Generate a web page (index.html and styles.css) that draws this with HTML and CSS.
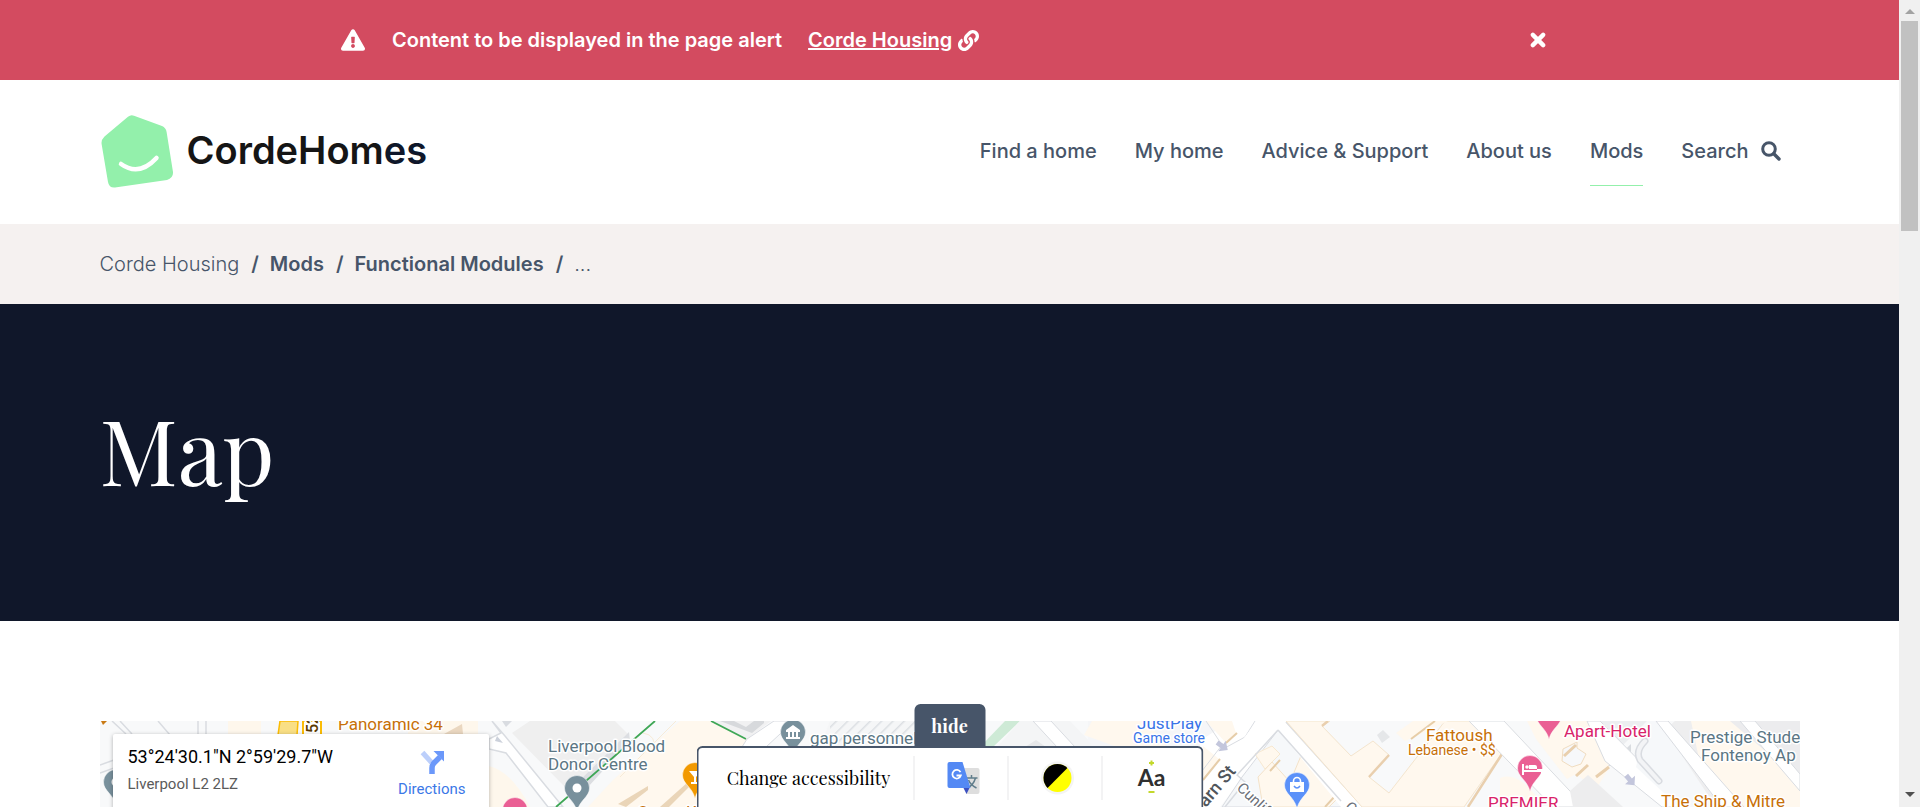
FILE: index.html
```html
<!DOCTYPE html>
<html lang="en">
<head>
<meta charset="utf-8">
<title>Map - Corde Housing</title>
<link rel="stylesheet" href="styles.css">
</head>
<body>
<div class="page">
  <div class="alert" role="alert">
    <svg class="icon-warning" viewBox="0 0 576 512" aria-hidden="true"><path fill="currentColor" d="M569.5 440C588 472 564.800 512 527.900 512H48.100c-36.900 0-60-40.100-41.600-72L246.400 24c18.500-32 64.700-32 83.200 0l239.900 416zM288 354c-25.400 0-46 20.600-46 46s20.600 46 46 46 46-20.600 46-46-20.600-46-46-46zm-43.700-165.300l7.400 136c.3 6.400 5.600 11.300 12 11.300h48.600c6.400 0 11.700-5 12-11.300l7.400-136c.4-6.900-5.100-12.700-12-12.700h-63.400c-6.900 0-12.400 5.800-12 12.700z"/></svg>
    <p class="alert-text">Content to be displayed in the page alert</p>
    <a class="alert-link" href="#"><span>Corde Housing</span>
      <svg class="icon-link" viewBox="0 0 512 512" aria-hidden="true"><path fill="currentColor" d="M326.600 185.400c59.700 59.800 58.900 155.700.4 214.600-.1.100-.2.300-.4.400l-67.200 67.200c-59.300 59.300-155.700 59.300-215 0-59.300-59.300-59.300-155.700 0-215l37.100-37.100c9.800-9.800 26.800-3.300 27.300 10.600.6 17.700 3.800 35.500 9.700 52.700 2 5.800.6 12.300-3.800 16.600l-13.100 13.100c-28 28-28.900 73.700-1.200 102 28 28.600 74.100 28.700 102.300.5l67.200-67.200c28.200-28.200 28.100-73.800 0-101.800-3.700-3.700-7.400-6.600-10.300-8.600a16 16 0 0 1-6.900-12.600c-.4-10.600 3.300-21.500 11.700-29.800l21.100-21.100c5.500-5.500 14.200-6.200 20.600-1.700a152.500 152.500 0 0 1 20.500 17.200zM467.500 44.400c-59.300-59.300-155.700-59.300-215 0l-67.200 67.200c-.1.100-.3.300-.4.400-58.600 58.900-59.400 154.800.4 214.600a152.500 152.500 0 0 0 20.500 17.200c6.400 4.500 15.100 3.800 20.600-1.700l21.100-21.100c8.400-8.400 12.100-19.200 11.700-29.800a16 16 0 0 0-6.900-12.600c-2.900-2-6.600-4.900-10.300-8.600-28.100-28.100-28.200-73.600 0-101.800l67.200-67.200c28.200-28.200 74.300-28.100 102.300.5 27.800 28.300 26.900 73.900-1.200 102l-13.100 13.100c-4.400 4.400-5.800 10.800-3.800 16.600 5.900 17.200 9 35 9.700 52.700.5 13.900 17.500 20.400 27.300 10.600l37.100-37.100c59.300-59.300 59.300-155.700 0-215z"/></svg>
    </a>
    <button class="alert-close" type="button" aria-label="Close alert">
      <svg viewBox="0 0 14 14" aria-hidden="true"><path d="M2.500 2.500l9 9M11.500 2.500l-9 9" stroke="currentColor" stroke-width="3.800" stroke-linecap="round"/></svg>
    </button>
  </div>

  <header class="header container">
    <a class="logo" href="#" aria-label="CordeHomes">
      <svg class="logo-mark" viewBox="0 0 74 74" aria-hidden="true">
        <path d="M28 1.800Q31 -.8 34 .8L62 11Q66 12.800 66.600 17L73 57Q73.500 63 67 65L15 72.500Q9 73 8 67L1.600 29Q1 25 4.500 21.500Z" fill="#93f0ab"/>
        <path d="M21 49Q39 62 56.500 43" fill="none" stroke="#fff" stroke-width="4.500" stroke-linecap="round"/>
      </svg>
      <span class="logo-text">CordeHom<span class="logo-end">es</span></span>
    </a>
    <nav class="nav" aria-label="Main">
      <a href="#">Find a home</a>
      <a href="#">My home</a>
      <a href="#">Advice &amp; Support</a>
      <a href="#">About us</a>
      <a class="current" href="#" aria-current="page">Mods</a>
      <a class="search" href="#">Search
        <svg viewBox="0 0 20 20" aria-hidden="true"><circle cx="8" cy="8" r="6.300" fill="none" stroke="currentColor" stroke-width="3"/><path d="M12.800 12.800l5.200 5.200" stroke="currentColor" stroke-width="3.400" stroke-linecap="round"/></svg>
      </a>
    </nav>
  </header>

  <nav class="breadcrumb" aria-label="Breadcrumb">
    <ol class="container">
      <li><a class="light" href="#">Corde Housing</a></li>
      <li><a href="#">Mods</a></li>
      <li><a href="#">Functional Modules</a></li>
      <li class="light">...</li>
    </ol>
  </nav>

  <section class="hero"><h1 class="container">Map</h1></section>

  <main class="container">
    <div class="map">
      <svg class="map-canvas" viewBox="0 0 1700 110" width="1700" height="110" role="img" aria-label="Map of Liverpool city centre">
        <defs>
          <path id="pin" d="M0-12.500A12.500 12.500 0 0 1 12.500 0C12.500 9 2.500 12 0 23.500C-2.500 12-12.500 9-12.500 0A12.500 12.500 0 0 1 0-12.500Z"/>
          <path id="oneway" d="M-6-2.500h6v-4l7 6.500-7 6.500v-4h-6z" fill="#c3c6dc"/>
          <pattern id="hatch" width="8" height="8" patternUnits="userSpaceOnUse" patternTransform="rotate(45)"><path d="M0 0v8" stroke="#dcdfe3" stroke-width="3"/></pattern>
        </defs>
        <rect width="1700" height="110" fill="#f8f9fa"/>
        <g stroke="#d9dce1" stroke-width="1.500" fill="none">
          <path d="M0 44L14 39M12 0L26 13M20 0L32 13M58 0L82 28M98 0V13M106 0V13M0 52L14 47"/>
        </g>
        <path d="M128 0h33v13h-33z" fill="#fef7ec"/>
        <path d="M1 0l6 0-4 4z" fill="#c97a14"/>
        <path d="M180 0h18l-1 14h-19z" fill="#f9df85" stroke="#fbbc04" stroke-width="1.500"/>
        <path d="M203 0h18v14h-18z" fill="#fff" stroke="#fbbc04" stroke-width="2"/>
        <path d="M308 0h70v13h-70z" fill="#fef7ec"/>
        <path d="M344 13l18-10 1 10" fill="#ead7c0"/>

        <path d="M389 0h30l16 12 35 46 25 28H389Z" fill="#f8f9fa"/>
        <path d="M389 45q22 5 41 41h-41z" fill="#fef7ec"/>
        <path d="M412 12l18-12h85l14 14-6 10-36 42-22 0z" fill="#efefef"/>
        <path d="M524 16l5-5 1 9-52 57-6-10z" fill="#dcdee2"/>
        <path d="M392 0l13 15 58 71h-15L406 32 389 28V18l12-6-9-12z" fill="#fff" stroke="#d9dce1" stroke-width="1.500"/>
        <path d="M402 0l4 6 6-6z" fill="#d9dce1"/>
        <path d="M395 20l2-5 6 7z" fill="#ccd1db"/>
        <path d="M590 0h21l47 25V86H488l25-27L580 0z" fill="#fff8ee"/>
        <path d="M543 12q14 2 11 18M520 56l56-56" stroke="#f7ebd7" fill="none"/>
        <path d="M518 83l30-18v4l-22 17z" fill="#ead5b8"/><path d="M560 86l37-33v5l-28 28z" fill="#ead5b8"/>
        <path d="M611 0h60l-24 18z" fill="#f1f1f2"/>
        <path d="M647 18l27-18h20l-28 26h-24z" fill="#fff" stroke="#d9dce1"/>
        <path d="M620 0l32 12 12-10v-2h-10l-8 6-12-6z" fill="#d7d9dc"/>
        <path d="M555 0L456 86M611 0l35 18" stroke="#3fa756" stroke-width="1.800"/>
        <path d="M730 0h155l-30 26H720z" fill="#f5f6f7"/><path d="M730 0h90v22h-90z" fill="url(#hatch)"/>

        <path d="M905 0h15l-27 26h-13z" fill="#ceead6"/>
        <path d="M920 0h50l25 26h-98z" fill="#f4f5f6"/>
        <path d="M925 26l11-7 10 7z" fill="#e6e7e9"/>
        <path d="M933 0h18l24 26h-18z" fill="#fff" stroke="#d9dce1"/>
        <path d="M988 0h160v40h-145l-15-20z" fill="#f5f6f8"/>
        <path d="M992 0h55l20 26h-50l-33-12z" fill="#fff8ee"/>
        <path d="M1100 20l30-20h55l-65 86h-20z" fill="#fff"/>
        <path d="M1106 0h26l4 12-10 10z" fill="#fff8ee"/><path d="M1103 25l16 13-17 22z" fill="#fff8ee"/>
        <path d="M1126 22l11-10M1103 59l17-21" stroke="#e6cda9" stroke-width="2"/>
        <path d="M1106 0l16 24-20 26M1155 0l-10 16-22 12" stroke="#dadde2" fill="none"/>

        <path d="M1185 0H1700V86H1262L1186 1Z" fill="#f8f9fa"/>
        <path d="M1178 9L1248 86H1122l20-30z" fill="#f6f8fa" stroke="#d8dbe1"/>
        <path d="M1172 25l8 8-15 15-10-15z" fill="#fff8ee" stroke="#f7e8d0"/>
        <path d="M1203 30l36 46-10 10h-66l-5-30 14-15 18 20z" fill="#fff8ee" stroke="#f3e2c9"/>
        <path d="M1236 74l-11 12M1180 39l-10 11" stroke="#e6cda9" stroke-width="2"/>
        <path d="M1157 0h29L1263 86h-22L1178 9L1125 57l-16 29h-18z" fill="#fff"/>
        <path d="M1178 9L1241 80M1186 1L1263 86M1178 9L1137 54l8 7-20 25" stroke="#d9dce1" stroke-width="1.500" fill="none"/>
        <path d="M1186 0h44l-8 5 29 30 22-15 16 14-20 22 20 16L1345 0h48l9 32-38 54h-102z" fill="#fff8ee" stroke="#f4e5ce"/>
        <path d="M1289 34l-20 22M1222 5l6-5M1402 33l-34 53" stroke="#e9cfae" stroke-width="2.500"/>
        <path d="M1277 14l6-5 7 7-8 6z" fill="#e5e7e9"/>
        <path d="M1296 12l17-12h35l-43 20z" fill="#fff8ee"/><path d="M1311 18l24-18" stroke="#e7cda7" stroke-width="2"/>

        <path d="M1369 0h35l81 86h-32z" fill="#fff" stroke="#dadde1"/>
        <path d="M1400 57q20-8 44 29h-44z" fill="#fff8ee"/>
        <path d="M1427 0h60l24 44-15 24-20-15-9 5-31-40z" fill="#fff8ee"/>
        <path d="M1463 28l14-7 0 6 9 6-5 10-9 3-10-6z" fill="#f7f8fa" stroke="#f0dcc0"/>
        <path d="M1476 55l12-11M1496 56l13-10M1464 35l12-11" stroke="#e9cfad" stroke-width="3"/>
        <path d="M1470 70l18-16 35 32h-50z" fill="#ededee"/>
        <path d="M1497 0h50l-37 37z" fill="#eceef0"/>
        <path d="M1519 45l12-11v-11l-23 22z" fill="#d9dce0"/>
        <path d="M1487 0h13l85 86h-23l-57-46z" fill="#fff" stroke="#d9dce1"/>
        <path d="M1547 0h20l90 86h-78l-43-40z" fill="#f6f8fa"/>
        <path d="M1545 20q-10 10-5 19l19 21" stroke="#d9dce1" stroke-width="7" fill="none" stroke-linecap="round"/><path d="M1545 20q-10 10-5 19l19 21" stroke="#f3f4f6" stroke-width="4" fill="none" stroke-linecap="round"/>
        <path d="M1565 9l10-9h28l78 86h-65z" fill="#eeeeef"/>
        <path d="M1591 0h55l54 58v28h-60l-38-34z" fill="#fff8ee"/>
        <path d="M1630 0h70v60z" fill="#ececee"/>
        <path d="M1556 0h12l76 86h-22z" fill="#fff" stroke="#d9dce1"/>
        <path d="M1640 0h15l45 53v17z" fill="#fff" stroke="#d9dce1"/>

        <g class="map-labels">
          <text class="poi-sign" transform="translate(218 12) rotate(-90)">52</text>
          <text class="poi food" x="238" y="9">Panoramic 34</text>
          <text class="poi" x="448" y="31">Liverpool Blood</text>
          <text class="poi" x="448" y="49">Donor Centre</text>
          <text class="poi" x="710" y="23">gap personnel</text>
          <text class="poi food" x="537" y="97">Ca</text>
          <text class="poi food" x="586" y="97">K</text>
          <text class="poi shop" x="1037" y="8">JustPlay</text>
          <text class="poi-sub shop" x="1033" y="22">Game store</text>
          <text class="street-big" transform="translate(1106 87) rotate(-50)">arn St</text>
          <text class="street" transform="translate(1136 68) rotate(43)">Cunliffe</text>
          <text class="street" transform="translate(1244 87) rotate(43)">Cu</text>
          <text class="poi food" x="1326" y="20">Fattoush</text>
          <text class="poi-sub food" x="1308" y="34">Lebanese • $$</text>
          <text class="poi hotel" x="1464" y="16">Apart-Hotel</text>
          <text class="poi hotel" x="1388" y="88">PREMIER</text>
          <text class="poi" x="1590" y="22">Prestige Stude</text>
          <text class="poi" x="1601" y="40">Fontenoy Ap</text>
          <text class="poi food" x="1561" y="86">The Ship &amp; Mitre</text>
        </g>
        <use href="#oneway" transform="translate(1122 25) rotate(35)"/>
        <use href="#oneway" transform="translate(1530 59) rotate(50)"/>
        <g stroke="#fff" stroke-opacity=".5">
          <use href="#pin" x="16" y="61" fill="#78909c"/>
          <use href="#pin" x="477" y="67" fill="#78909c"/>
          <use href="#pin" x="415" y="89" fill="#ea5f94"/>
          <use href="#pin" x="693" y="11" fill="#78909c"/>
          <use href="#pin" x="595" y="54" fill="#f29900"/>
          <use href="#pin" x="1197" y="64" fill="#5b91f9"/>
          <use href="#pin" x="1449" y="-5" fill="#ea5f94"/>
          <use href="#pin" x="1430" y="47" fill="#ea5f94"/>
        </g>
        <g fill="#fff">
          <circle cx="477" cy="67" r="4.500"/><circle cx="16" cy="61" r="4.500"/>
          <path d="M686 9l7-5 7 5v2h-14zM688 11h2v6h-2zM692 11h2v6h-2zM696 11h2v6h-2zM686 16h14v2h-14z"/>
          <path d="M589 50h12l-5 6v5h3v2h-8v-2h3v-5z"/>
          <path d="M1190 61h14v10h-14z"/><path d="M1422 43h2v6h13v-3q0-2-2-2h-6v4h14v6h-2v-3h-17v3h-2z"/>
          <circle cx="1427" cy="46" r="1.800"/>
        </g>
        <path d="M1193.500 62v-2a3.500 3.500 0 0 1 7 0v2" fill="none" stroke="#fff" stroke-width="1.600"/>
        <path d="M1194 65q3 4 6 0" fill="none" stroke="#5b91f9" stroke-width="1.500"/>
      </svg>
      <div class="place-card">
        <div>
          <div class="place-name">53°24'30.1"N 2°59'29.7"W</div>
          <div class="place-address">Liverpool L2 2LZ</div>
        </div>
        <a class="directions" href="#">
          <svg viewBox="0 0 24 24" aria-hidden="true"><path d="M2.500 2.500l9 10" stroke="#bccffb" stroke-width="5"/><path d="M12 24v-6q0-3 2-5l6-6" fill="none" stroke="#6b98fa" stroke-width="5.500"/><path d="M13.500 1H24v10.500z" fill="#6b98fa"/></svg>
          <span>Directions</span>
        </a>
      </div>
    </div>
  </main>

  <div class="access">
    <button class="access-toggle" type="button">hide</button>
    <div class="access-bar">
      <span class="access-label">Change accessibility</span>
      <button type="button" aria-label="Translate">
        <svg width="34" height="34" viewBox="0 0 34 34" aria-hidden="true">
          <path d="M14 7h17a2 2 0 0 1 2 2v22a2 2 0 0 1-2 2H20z" fill="#dedede"/>
          <path d="M20 17h11M25 14v3M29 17q-2 7-8 10M22 19q2 5 8 8" fill="none" stroke="#607d8b" stroke-width="1.500"/>
          <path d="M17 27h6l-3 6z" fill="#3b4fc0"/>
          <path d="M3 1h13l8 26H3a2 2 0 0 1-2-2V3a2 2 0 0 1 2-2z" fill="#5489f4"/>
          <path d="M14 11.200A4.300 4.300 0 1 0 14.300 14.500H10" fill="none" stroke="#fff" stroke-width="1.800"/>
        </svg>
      </button>
      <button type="button" aria-label="Contrast">
        <svg width="34" height="34" viewBox="0 0 34 34" aria-hidden="true"><circle cx="17" cy="17" r="16.500" fill="#f4f4f4"/><circle cx="17" cy="17" r="14" fill="#ff0"/><path d="M7.100 26.900A14 14 0 0 1 26.900 7.100Z" fill="#000"/></svg>
      </button>
      <button type="button" aria-label="Text size">
        <svg width="34" height="34" viewBox="0 0 34 34" aria-hidden="true"><text class="size-glyph" x="17" y="25" text-anchor="middle">Aa</text><path d="M14.500 2h5M17-.5v5M14 31h6" stroke="#c3d82c" stroke-width="2"/></svg>
      </button>
    </div>
  </div>
</div>
<div class="scrollbar" aria-hidden="true">
  <span class="arrow-up"></span><span class="thumb"></span><span class="arrow-down"></span>
</div>
</body>
</html>
```
FILE: styles.css
```css
* { box-sizing: border-box; }

body {
  margin: 0;
  display: flex;
  height: 100vh;
  overflow: hidden;
  background: #fff;
  color: #475569;
  font: 20px/30px Inter, "Liberation Sans", sans-serif;
}
a { color: inherit; text-decoration: none; }
button { padding: 0; border: 0; background: none; color: inherit; font: inherit; cursor: pointer; }

.page { position: relative; flex: 1; min-width: 0; overflow: hidden; }
.container { width: calc(100% - 198px); max-width: 1700px; margin: 0 auto; }

.alert {
  display: flex;
  align-items: center;
  height: 80px;
  padding: 0 339px 0 341px;
  background: #d34b60;
  color: #fff;
  font-weight: 600;
}
.icon-warning { width: 24px; height: 22px; margin-right: 27px; }
.alert-text { margin: 0 26px 0 0; }
.alert-link { display: flex; align-items: center; gap: 6px; }
.alert-link span { text-decoration: underline; text-decoration-thickness: 2px; }
.icon-link { width: 21px; height: 21px; }
.alert-close { display: flex; margin: 0 14px 0 auto; }
.alert-close svg { width: 16px; height: 16px; }

.header { display: flex; align-items: center; justify-content: space-between; height: 144px; padding-bottom: 1px; }
.logo { display: flex; align-items: center; gap: 13px; }
.logo-mark { width: 74px; height: 74px; }
.logo-text { padding-bottom: 4px; color: #151515; font-size: 38px; font-weight: 600; line-height: 48px; }
.logo-end { color: #0f172a; }

.nav { display: flex; gap: 38px; margin-right: 19px; font-weight: 500; }
.nav a { padding: 19px 0; border-bottom: 1px solid transparent; }
.nav .current { border-color: #93f0ab; }
.nav .search { display: flex; align-items: center; gap: 12px; }
.search svg { width: 20px; height: 20px; }

.breadcrumb { background: #f5f1f0; }
.breadcrumb ol { display: flex; align-items: center; height: 80px; padding: 0; list-style: none; font-weight: 600; }
.breadcrumb li + li::before { content: "/"; margin: 0 11px 0 12px; }
.breadcrumb .light { font-weight: 300; }
.breadcrumb li.light::before { font-weight: 600; }

.hero { padding: 85px 0 112px; background: #10172a; color: #fff; }
.hero h1 { font: 400 90px/120px "Playfair Display", "Liberation Serif", serif; }

.map { position: relative; height: 450px; margin-top: 100px; overflow: hidden; font-family: Roboto, sans-serif; }
.map-canvas { display: block; }
.map-labels text { paint-order: stroke; stroke: #fff; stroke-width: 3px; stroke-linejoin: round; }
.poi { fill: #5b7684; font-size: 17px; }
.poi-sub { font-size: 14px; }
.map-labels .food { fill: #c77008; }
.map-labels .shop { fill: #3974e8; }
.map-labels .hotel { fill: #d9236a; }
.poi-sign { fill: #5b3a00; font-size: 16px; font-weight: 500; }
.street { fill: #6b7078; font-size: 15px; }
.street-big { fill: #50555b; font-size: 18px; font-weight: 500; }

.place-card {
  position: absolute;
  top: 13px;
  left: 13px;
  display: flex;
  justify-content: space-between;
  width: 376px;
  height: 116px;
  padding: 11px 23px 0 15px;
  border-radius: 2px;
  background: #fff;
  box-shadow: 0 1px 4px rgba(0, 0, 0, .3);
}
.place-name { color: #000; font-size: 18px; line-height: 24px; }
.place-address { margin-top: 4px; color: #5b5b5b; font-size: 15px; line-height: 22px; }
.directions { display: flex; flex-direction: column; align-items: center; gap: 6px; padding-top: 5px; color: #3b78e7; font-size: 15px; line-height: 18px; }
.directions svg { width: 24px; height: 24px; }

.access { position: absolute; bottom: 0; left: 50%; width: 507px; transform: translateX(-50%); text-align: center; }
.access-toggle {
  display: block;
  width: 71px;
  height: 43px;
  margin: 0 auto;
  border-radius: 6px 6px 0 0;
  background: #475569;
  color: #fff;
  font: 700 18px/42px "Playfair Display", "Liberation Serif", serif;
}
.access-bar {
  display: flex;
  align-items: center;
  height: 61px;
  margin-top: -1px;
  padding: 0 6px 0 6px;
  border: 2px solid #475569;
  border-bottom: 0;
  border-radius: 6px 6px 0 0;
  background: #fff;
}
.access-label { flex: 1; color: #000; font: 400 18px/30px "Playfair Display", "Liberation Serif", serif; }
.access-bar button { display: flex; align-items: center; justify-content: center; width: 94px; height: 44px; padding-left: 5px; border-left: 1px solid #e8e8ea; }
.access-bar svg { overflow: visible; }
.size-glyph { fill: #303030; font: 700 23px Lato, sans-serif; }

.scrollbar { display: flex; flex-direction: column; align-items: center; width: 21px; height: 100%; padding: 9px 2px 10px; background: #f0f0f0; }
.arrow-up { border: 5px solid transparent; border-top: 0; border-bottom-color: #a3a3a3; }
.thumb { width: 17px; height: 210px; margin-top: 7px; background: #c1c1c1; }
.arrow-down { margin-top: auto; border: 5px solid transparent; border-bottom: 0; border-top-color: #505050; }
```
